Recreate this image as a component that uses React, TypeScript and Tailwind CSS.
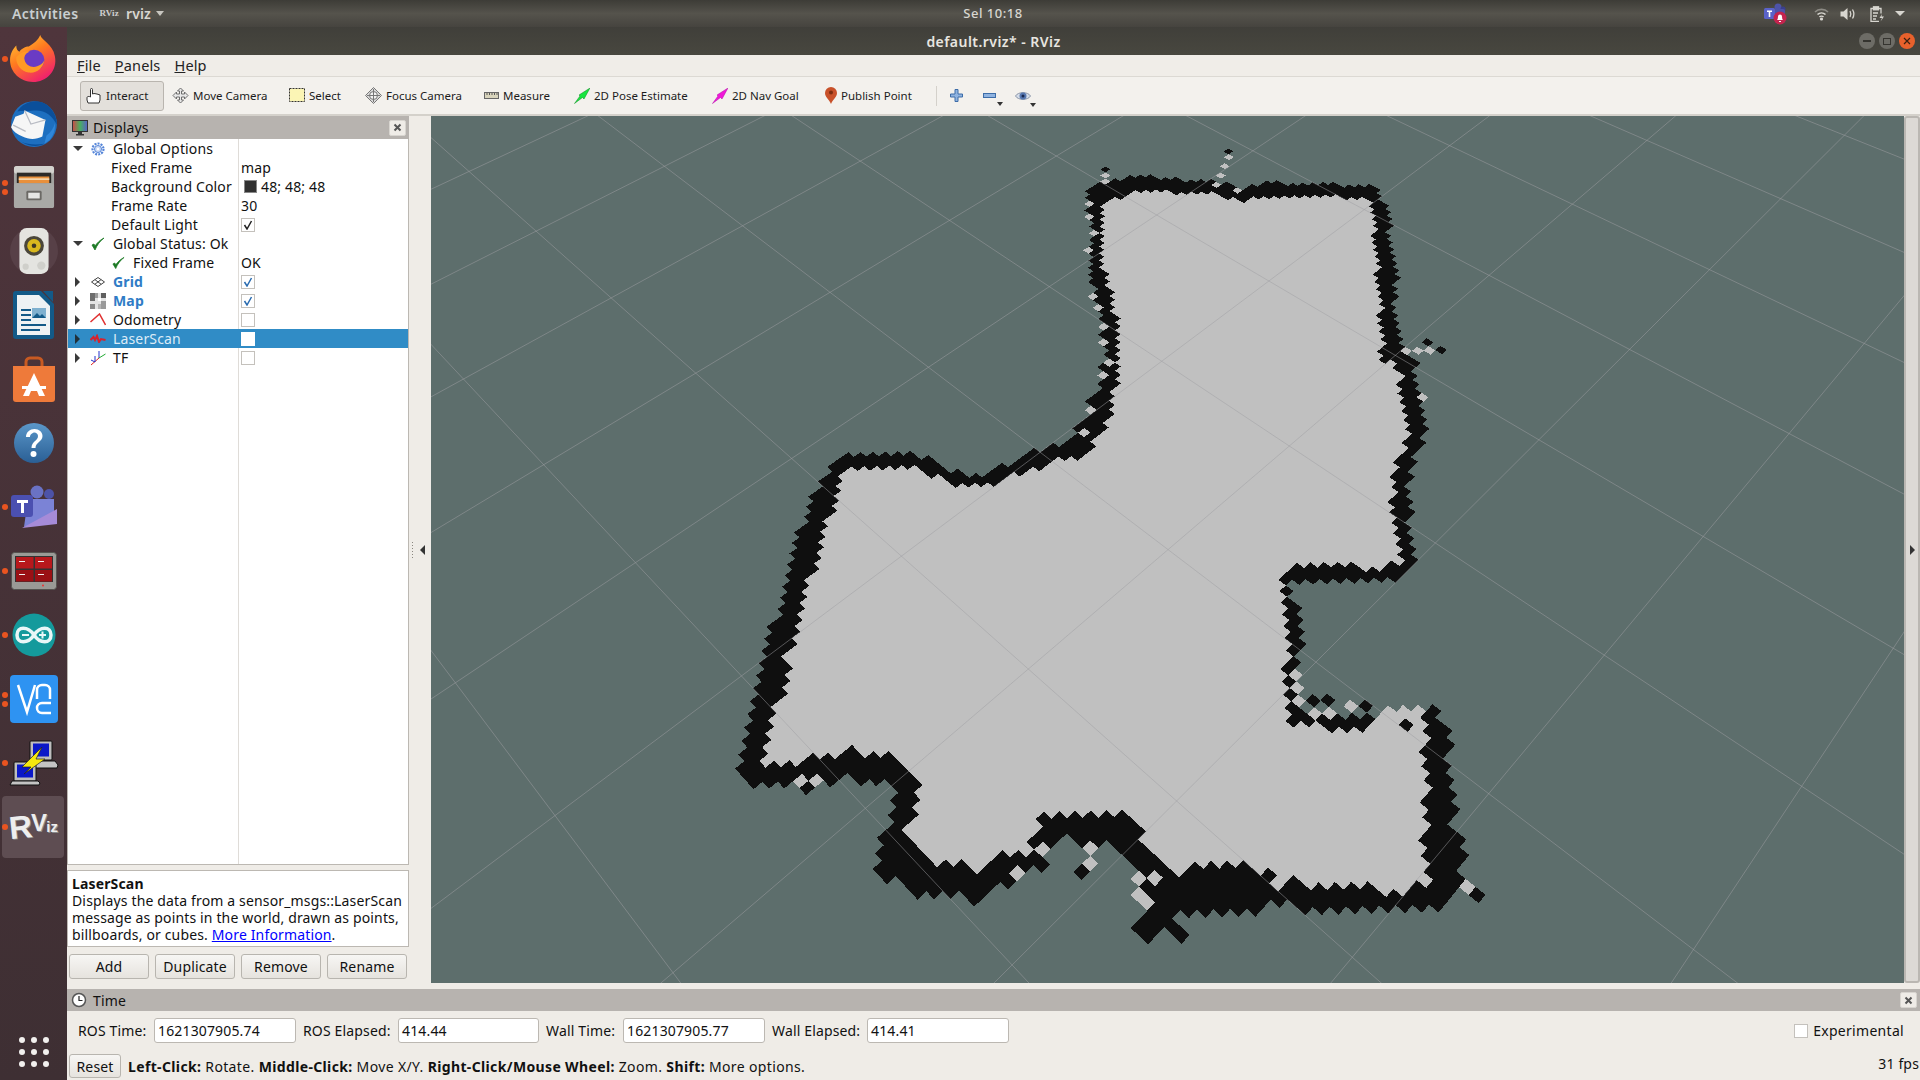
import React from "react";

/* ---------- perspective map ---------- */
type P = [number, number];
const refs: [number, number, number, number][] = [
  [0, 0, 1353, 959], [1, 0, 1177, 802], [2, 0, 1028, 669], [3, 0, 902, 556], [4, 0, 792, 457],
  [0, 1, 1487, 793], [1, 1, 1315, 662], [2, 1, 1169, 550], [3, 1, 1040, 452], [2, 2, 1287, 447],
  [3, 2, 1161, 361], [3, 3, 1267, 282], [4, 3, 1156, 216], [5, 3, 1056, 157], [3, 4, 1380, 199],
  [4, 4, 1250, 153], [3, 5, 1443, 150],
];
function solve(A: number[][], b: number[]) {
  const n = b.length;
  const M = A.map((r, i) => [...r, b[i]]);
  for (let c = 0; c < n; c++) {
    let p = c;
    for (let r = c + 1; r < n; r++) if (Math.abs(M[r][c]) > Math.abs(M[p][c])) p = r;
    [M[c], M[p]] = [M[p], M[c]];
    for (let r = 0; r < n; r++) {
      if (r === c) continue;
      const f = M[r][c] / M[c][c];
      for (let k = c; k <= n; k++) M[r][k] -= f * M[c][k];
    }
  }
  return M.map((r, i) => r[n] / r[i]);
}
function fit() {
  const AtA = Array.from({ length: 8 }, () => new Array(8).fill(0));
  const Atb = new Array(8).fill(0);
  const add = (row: number[], v: number) => {
    for (let a = 0; a < 8; a++) {
      Atb[a] += row[a] * v;
      for (let c = 0; c < 8; c++) AtA[a][c] += row[a] * row[c];
    }
  };
  for (const [i, j, x0, y0] of refs) {
    const x = x0 / 1000, y = y0 / 1000;
    add([i, j, 1, 0, 0, 0, -i * x, -j * x], x);
    add([0, 0, 0, i, j, 1, -i * y, -j * y], y);
  }
  return solve(AtA, Atb);
}
const h = fit();
const fwd = (u: number, v: number): P => {
  const w = h[6] * u + h[7] * v + 1;
  return [(1000 * (h[0] * u + h[1] * v + h[2])) / w, (1000 * (h[3] * u + h[4] * v + h[5])) / w];
};
const inv = (x0: number, y0: number): P => {
  const x = x0 / 1000, y = y0 / 1000;
  const s = solve([[h[0] - h[6] * x, h[1] - h[7] * x], [h[3] - h[6] * y, h[4] - h[7] * y]], [x - h[2], y - h[5]]);
  return [s[0], s[1]];
};

const wall: [number, number, number][] = [
  [1097, 193, 20], [1140, 183, 16], [1190, 187, 12], [1217, 187, 12], [1240, 195, 14], [1262, 190, 14], [1323, 190, 12],
  [1373, 193, 12], [1380, 210, 14], [1383, 243, 16], [1387, 277, 18], [1387, 310, 14], [1392, 345, 14], [1400, 355, 16],
  [1407, 372, 14], [1413, 397, 20], [1416, 430, 18], [1414, 441, 14], [1402, 471, 14], [1400, 500, 14], [1405, 535, 16],
  [1408, 565, 14], [1384, 575, 13], [1340, 572, 14], [1296, 572, 16], [1286, 582, 12], [1290, 620, 14], [1294, 650, 14],
  [1292, 690, 10], [1293, 718, 14], [1330, 722, 12], [1367, 725, 12], [1385, 712, 0], [1425, 712, 0], [1437, 730, 16],
  [1438, 745, 22], [1437, 770, 26], [1440, 800, 28], [1438, 830, 28], [1445, 850, 35], [1445, 880, 35], [1430, 895, 26],
  [1400, 905, 16], [1380, 900, 22], [1350, 898, 22], [1317, 900, 30], [1290, 892, 28], [1243, 888, 43], [1207, 888, 43],
  [1173, 893, 45], [1147, 865, 22], [1135, 850, 26], [1125, 830, 30], [1090, 830, 30], [1050, 830, 26], [1040, 845, 18],
  [1035, 860, 22], [1000, 872, 26], [980, 885, 30], [950, 880, 34], [925, 878, 40], [897, 860, 42], [895, 835, 24], [900, 820, 20],
  [905, 800, 22], [907, 780, 20], [880, 770, 30], [855, 765, 28], [825, 768, 26], [800, 772, 22], [775, 773, 20],
  [752, 775, 22], [750, 760, 22], [757, 725, 22], [770, 690, 26], [778, 650, 22], [790, 610, 22], [800, 575, 22],
  [813, 530, 24], [825, 495, 20], [835, 470, 14], [850, 460, 14], [910, 460, 14], [930, 468, 14], [955, 478, 12],
  [983, 482, 10], [1020, 465, 14], [1050, 455, 16], [1075, 447, 20], [1095, 425, 24], [1107, 387, 16], [1110, 363, 14],
  [1112, 343, 14], [1108, 317, 16], [1103, 297, 16], [1097, 273, 14], [1097, 253, 14], [1097, 230, 14], [1097, 203, 16],
];
const spurs: [number, number, number][][] = [
  [[1182, 945, 14], [1170, 915, 18]],
  [[1140, 937, 12], [1160, 910, 16]],
  [[1385, 355, 10], [1410, 362, 10]],
];
const z5 = (a: number[][]) => a.map(([x, y]) => [1040 + x / 3, 130 + y / 3]);
const z7 = (a: number[][]) => a.map(([x, y]) => [1000 + x / 3, 650 + y / 3]);
const z6 = (a: number[][]) => a.map(([x, y]) => [720 + x / 3, 440 + y / 3]);
const strayFree = [
  ...z5([[150, 228], [150, 265], [160, 310], [145, 360], [157, 500], [180, 537], [190, 590], [188, 637], [205, 697], [188, 735], [150, 838], [132, 905], [193, 142], [193, 158], [565, 85], [553, 110], [545, 135], [537, 160], [595, 180], [1085, 665], [1125, 655], [1160, 660], [1135, 805]]),
  ...z7([[885, 75], [890, 115], [895, 155], [940, 190], [995, 180], [1050, 170], [1160, 185], [1205, 180], [1250, 180], [1245, 235], [1400, 715], [1265, 700], [270, 600], [270, 650], [55, 680], [420, 690], [470, 690], [430, 740], [445, 765], [130, 590], [830, 710], [1195, 190]]),
  ...z6([[235, 1030], [285, 1030], [135, 970]]),
];
const strayWall = [
  ...z5([[195, 122], [570, 63], [150, 812], [1150, 640], [1205, 652]]),
  ...z7([[935, 152], [980, 152], [1095, 168], [1290, 185], [1225, 215], [1430, 738], [250, 675], [810, 682]]),
  ...z6([[258, 1050]]),
];
const strayBg = z7([[200, 580]]);

function segDist(px: number, py: number, a: number[], b: number[]) {
  const dx = b[0] - a[0], dy = b[1] - a[1];
  const l = dx * dx + dy * dy || 1;
  let t = ((px - a[0]) * dx + (py - a[1]) * dy) / l;
  t = Math.max(0, Math.min(1, t));
  const ex = px - a[0] - t * dx, ey = py - a[1] - t * dy;
  return { d: Math.sqrt(ex * ex + ey * ey), w: a[2] + t * (b[2] - a[2]) };
}
const RES = 20, UMIN = -2, UMAX = 8, VMIN = -3, VMAX = 7;
function buildMap() {
  const nu = (UMAX - UMIN) * RES, nv = (VMAX - VMIN) * RES;
  const g = new Uint8Array(nu * nv);
  const segs: [number[], number[]][] = [];
  wall.forEach((p, i) => segs.push([p, wall[(i + 1) % wall.length]]));
  spurs.forEach((s) => segs.push([s[0], s[1]]));
  for (let a = 0; a < nu; a++) {
    for (let b = 0; b < nv; b++) {
      const [x, y] = fwd(UMIN + (a + 0.5) / RES, VMIN + (b + 0.5) / RES);
      if (x < 720 || x > 1500 || y < 160 || y > 960) continue;
      let black = false;
      for (const [p, q] of segs) {
        const r = segDist(x, y, p, q);
        if (r.d <= r.w / 2) { black = true; break; }
      }
      if (black) { g[a * nv + b] = 2; continue; }
      let inside = false;
      for (let i = 0, j = wall.length - 1; i < wall.length; j = i++) {
        const A = wall[i], B = wall[j];
        if (A[1] > y !== B[1] > y && x < ((B[0] - A[0]) * (y - A[1])) / (B[1] - A[1]) + A[0]) inside = !inside;
      }
      if (inside) g[a * nv + b] = 1;
    }
  }
  const put = (list: number[][], val: number) => {
    for (const [x, y] of list) {
      const [u, v] = inv(x, y);
      const a = Math.floor((u - UMIN) * RES), b = Math.floor((v - VMIN) * RES);
      if (a >= 0 && a < nu && b >= 0 && b < nv) g[a * nv + b] = val;
    }
  };
  put(strayFree, 1);
  put(strayWall, 2);
  put(strayBg, 0);
  const d: Record<number, string[]> = { 1: [], 2: [] };
  const f = (p: P) => `${p[0].toFixed(1)} ${p[1].toFixed(1)}`;
  for (let b = 0; b < nv; b++) {
    for (let a = 0; a < nu; a++) {
      const val = g[a * nv + b];
      if (!val) continue;
      const u0 = UMIN + a / RES, u1 = UMIN + (a + 1) / RES, v0 = VMIN + b / RES, v1 = VMIN + (b + 1) / RES;
      d[val].push(`M${f(fwd(u0, v0))}L${f(fwd(u1, v0))}L${f(fwd(u1, v1))}L${f(fwd(u0, v1))}Z`);
    }
  }
  return { free: d[1].join(""), occ: d[2].join("") };
}
function gridLines() {
  const out: string[] = [];
  for (let k = -5; k <= 9; k++) {
    const a = fwd(k, -5), b = fwd(k, 9);
    out.push(`M${a[0].toFixed(1)} ${a[1].toFixed(1)}L${b[0].toFixed(1)} ${b[1].toFixed(1)}`);
    const c = fwd(-5, k), e = fwd(9, k);
    out.push(`M${c[0].toFixed(1)} ${c[1].toFixed(1)}L${e[0].toFixed(1)} ${e[1].toFixed(1)}`);
  }
  return out.join("");
}

function MapView() {
  const m = React.useMemo(buildMap, []);
  const lines = React.useMemo(gridLines, []);
  return (
    <svg className="block w-[1473px] h-[867px]" viewBox="431 116 1473 867">
      <rect x="431" y="116" width="1473" height="867" fill="#5d6e6c" />
      <path d={m.free} fill="#c0c0c0" shapeRendering="crispEdges" />
      <path d={m.occ} fill="#0f0f0f" shapeRendering="crispEdges" />
      <path d={lines} stroke="#a0a0a4" strokeOpacity="0.5" strokeWidth="1" fill="none" />
    </svg>
  );
}

/* ---------- dock icons ---------- */
const Firefox = () => (
  <svg width="50" height="50" viewBox="0 0 48 48">
    <defs>
      <linearGradient id="ff" x1="0" y1="0" x2="0.6" y2="1"><stop offset="0" stopColor="#ffd43a" /><stop offset="0.5" stopColor="#ff7a1f" /><stop offset="1" stopColor="#f0246a" /></linearGradient>
    </defs>
    <path d="M30 1c1 5 12 9 14 20 3 14-8 25-21 25C11 46 1 37 1 25 1 19 4 14 7 11c0 3 1 5 3 6 2-3 6-5 9-5 5-3 9-6 11-11z" fill="url(#ff)" />
    <circle cx="24" cy="25" r="10" fill="#6a3bc4" />
    <path d="M7 22c3-4 8-6 13-5-4 1-6 4-5 8 1 5 7 8 12 6 3-1 6-3 7-6-1 8-8 13-15 12-7-1-13-8-12-15z" fill="#ff9a26" />
  </svg>
);
const Thunderbird = () => (
  <svg width="50" height="50" viewBox="0 0 48 48">
    <circle cx="24" cy="25" r="22" fill="#1d6fc0" />
    <path d="M8 13C14 3 28 0 37 7c6 5 9 12 9 19-4-9-12-15-22-14-7 1-12 0-16 1z" fill="#0b4f9a" />
    <path d="M2 28l4-10 8-3 1-3 20 9-3 16c-6 3-13 3-19 0C8 35 4 32 2 28z" fill="#f6f6f6" />
    <path d="M15 12l6 13 14-4M4 26l12 6" stroke="#b9bcc4" strokeWidth="1.200" fill="none" />
    <path d="M36 36c4-3 7-7 8-12 1 9-3 16-10 20l2-8z" fill="#2f86d9" />
    <path d="M12 42c6 3 14 3 22 2-6 3-14 3-22-2z" fill="#0b4f9a" />
  </svg>
);
const Files = () => (
  <svg width="42" height="44" viewBox="0 0 44 46">
    <path d="M1 4a3 3 0 013-3h36a3 3 0 013 3v38a3 3 0 01-3 3H4a3 3 0 01-3-3z" fill="#a3a3a0" />
    <rect x="1" y="1" width="42" height="8" rx="3" fill="#d4d3cf" />
    <rect x="4" y="8" width="36" height="11" fill="#2c2a28" />
    <rect x="6" y="12" width="32" height="7" fill="#e8903c" />
    <rect x="6" y="14" width="32" height="1.500" fill="#f6e2c0" />
    <rect x="1" y="19" width="42" height="26" rx="2" fill="#a9a9a6" />
    <rect x="14" y="27" width="16" height="10" rx="1.500" fill="#6b6965" />
    <rect x="16" y="29" width="12" height="6" fill="#e6e6e4" />
  </svg>
);
const Speaker = () => (
  <svg width="50" height="50" viewBox="0 0 48 48">
    <circle cx="24" cy="24" r="23" fill="#574047" />
    <rect x="10" y="2" width="28" height="44" rx="7" fill="#e4e4e0" />
    <circle cx="24" cy="19" r="9.500" fill="#4a463a" />
    <circle cx="24" cy="19" r="6.500" fill="#d8b81e" />
    <circle cx="24" cy="19" r="2.200" fill="#3a3626" />
    <circle cx="16" cy="39" r="3" fill="#cfcfca" />
    <circle cx="31" cy="38" r="4" fill="#d0d0cb" />
  </svg>
);
const Writer = () => (
  <svg width="42" height="48" viewBox="0 0 42 48">
    <path d="M3 0h25l13 13v32a3 3 0 01-3 3H3a3 3 0 01-3-3V3a3 3 0 013-3z" fill="#135a88" />
    <path d="M4 4h22l11 11v29H4z" fill="#eef2f4" />
    <path d="M30 0h10v11z" fill="#135a88" />
    <rect x="8" y="18" width="10" height="2" fill="#135a88" /><rect x="8" y="23" width="10" height="2" fill="#135a88" /><rect x="8" y="28" width="10" height="2" fill="#135a88" />
    <rect x="19" y="17" width="14" height="10" fill="#7fb0cf" />
    <path d="M19 27l5-5 3 3 2-2 4 4z" fill="#135a88" />
    <rect x="8" y="33" width="25" height="2" fill="#135a88" /><rect x="8" y="38" width="19" height="2" fill="#135a88" />
  </svg>
);
const Software = () => (
  <svg width="44" height="46" viewBox="0 0 44 46">
    <path d="M14 10V6a4 4 0 014-4h8a4 4 0 014 4v4" stroke="#c85a22" strokeWidth="3" fill="none" />
    <path d="M1 10h42v33a3 3 0 01-3 3H4a3 3 0 01-3-3z" fill="#ee7a3a" />
    <path d="M22 17l11 23h-6l-2-5h-6l-2 5h-6z" fill="#fff" />
    <rect x="10" y="30" width="24" height="3" fill="#fff" />
  </svg>
);
const Help = () => (
  <svg width="42" height="42" viewBox="0 0 42 42">
    <defs><linearGradient id="hp" x1="0" y1="0" x2="0" y2="1"><stop offset="0" stopColor="#5b97c9" /><stop offset="1" stopColor="#2a5f95" /></linearGradient></defs>
    <circle cx="21" cy="21" r="20" fill="url(#hp)" />
    <path d="M13 15c0-5 4-8 8.500-8s8 3 8 7c0 6-7 6-7 12h-4c0-7 6.500-7 6.500-12 0-2-2-3.500-3.500-3.500S17 12 17 15z" fill="#fff" />
    <circle cx="20.500" cy="32" r="3" fill="#fff" />
  </svg>
);
const Teams = () => (
  <svg width="48" height="46" viewBox="0 0 48 46">
    <circle cx="27" cy="8" r="6.500" fill="#6a72c4" />
    <circle cx="39" cy="10" r="5" fill="#4d53a8" />
    <path d="M18 15h26v20l-30 8z" fill="#7b83d6" />
    <rect x="1" y="11" width="22" height="22" rx="3" fill="#4b50b0" />
    <path d="M7 16h11v3h-4v10h-3V19H7z" fill="#fff" />
    <path d="M12 44l35-19v15z" fill="#a68bd8" />
  </svg>
);
const RedPanel = () => (
  <svg width="46" height="38" viewBox="0 0 46 38">
    <rect x="0.500" y="0.500" width="45" height="37" rx="3" fill="#9a9a96" stroke="#55534f" />
    <rect x="4" y="4" width="38" height="26" fill="#333" />
    <rect x="5" y="5" width="17.500" height="11.500" fill="#b8181c" /><rect x="24" y="5" width="17" height="11.500" fill="#b8181c" />
    <rect x="5" y="18" width="17.500" height="11.500" fill="#9a1014" /><rect x="24" y="18" width="17" height="11.500" fill="#9a1014" />
    <rect x="8" y="9" width="6" height="1" fill="#eee" /><rect x="27" y="9" width="6" height="1" fill="#eee" />
    <rect x="8" y="22" width="6" height="1" fill="#eee" /><rect x="27" y="22" width="6" height="1" fill="#eee" />
    <circle cx="32" cy="33.500" r="1" fill="#e33" />
  </svg>
);
const Arduino = () => (
  <svg width="44" height="44" viewBox="0 0 44 44">
    <circle cx="22" cy="22" r="21.500" fill="#149a9c" />
    <path d="M5 22c0-9 11-9 17 0 6 9 17 9 17 0s-11-9-17 0c-6 9-17 9-17 0z" stroke="#e8f7f7" strokeWidth="3.500" fill="none" />
    <rect x="10" y="21" width="7" height="2" fill="#e8f7f7" />
    <path d="M27 21h2.500v-2.500h2V21H34v2h-2.500v2.500h-2V23H27z" fill="#e8f7f7" />
  </svg>
);
const Vnc = () => (
  <svg width="48" height="48" viewBox="0 0 48 48">
    <rect width="48" height="48" rx="4" fill="#2e93f2" />
    <path d="M8 10l9 27 8-27M27 24V15a5 5 0 015-5h3a5 5 0 015 5v9" stroke="#fff" strokeWidth="2.500" fill="none" />
    <path d="M41 28H32a5 5 0 000 10h9" stroke="#fff" strokeWidth="2.500" fill="none" />
  </svg>
);
const Network = () => (
  <svg width="50" height="46" viewBox="0 0 50 46">
    <rect x="21" y="1" width="22" height="19" rx="1" fill="#bdbdbd" stroke="#111" /><rect x="24" y="3.500" width="16" height="13" fill="#0a18c8" />
    <path d="M20 21h26l3 4-1 3H21z" fill="#c4c4c4" stroke="#111" />
    <rect x="5" y="22" width="22" height="19" rx="1" fill="#bdbdbd" stroke="#111" /><rect x="8" y="24.500" width="16" height="13" fill="#0a18c8" />
    <path d="M3 41h26l2 2-1 2H1z" fill="#c4c4c4" stroke="#111" />
    <path d="M33 7L13 27h9l-7 7 21-15h-9l6-12z" fill="#f5e80e" stroke="#222" strokeWidth="0.700" />
  </svg>
);

const Dot = ({ y }: { y: number }) => <span className="w-[6px] h-[6px] rounded-full bg-[#e95420] block" style={{ marginTop: y }} />;

function DockItem({ dots = 0, active, children }: { dots?: number; active?: boolean; children: React.ReactNode }) {
  return (
    <div className="h-[64px] w-[67px] flex items-center justify-center relative">
      {active && <div className="absolute left-[2px] top-[1px] w-[62px] h-[62px] rounded-[4px] bg-[#5e4d52]" />}
      {dots > 0 && (
        <div className="absolute left-[2px] top-0 h-full flex flex-col justify-center">
          {dots >= 1 && <Dot y={0} />}
          {dots >= 2 && <Dot y={3} />}
        </div>
      )}
      <div className="relative flex items-center justify-center">{children}</div>
    </div>
  );
}

function Dock() {
  return (
    <div className="w-[67px] shrink-0 flex flex-col bg-gradient-to-b from-[#4f353c] to-[#3e2f33]">
      <DockItem dots={1}><Firefox /></DockItem>
      <DockItem><Thunderbird /></DockItem>
      <DockItem dots={2}><Files /></DockItem>
      <DockItem><Speaker /></DockItem>
      <DockItem><Writer /></DockItem>
      <DockItem><Software /></DockItem>
      <DockItem><Help /></DockItem>
      <DockItem dots={1}><Teams /></DockItem>
      <DockItem dots={1}><RedPanel /></DockItem>
      <DockItem dots={1}><Arduino /></DockItem>
      <DockItem dots={2}><Vnc /></DockItem>
      <DockItem dots={1}><Network /></DockItem>
      <DockItem dots={1} active>
        <span className="font-['Liberation_Sans',sans-serif] font-bold text-[#eeeeee] leading-none flex items-start [text-shadow:1px_1px_0_#8a8a8a]">
          <span className="text-[32px] rotate-[-6deg]">R</span>
          <span className="text-[24px] ml-[-1px]">V</span>
          <span className="text-[15px] mt-[8px] ml-[-1px]">iz</span>
        </span>
      </DockItem>
      <div className="flex-1 flex items-end justify-center pb-[13px]">
        <div className="grid grid-cols-3 gap-x-[6px] gap-y-[6px]">
          {Array.from({ length: 9 }).map((_, i) => <span key={i} className="w-[6px] h-[6px] rounded-full bg-[#f2f0ee] block" />)}
        </div>
      </div>
    </div>
  );
}

/* ---------- toolbar icons ---------- */
const HandI = () => (
  <svg width="17" height="17" viewBox="0 0 17 17" fill="#fff" stroke="#333" strokeWidth="1">
    <path d="M5.500 10V2.500a1 1 0 012 0V7l1.500-.5 2 .3 2 .5 2 .7V13l-1 3H3l-1-3V10.500c0-1 2-1.500 3.500-.5z" />
  </svg>
);
const MoveI = () => (
  <svg width="17" height="17" viewBox="0 0 17 17" fill="none" stroke="#6d6d6d" strokeWidth="1">
    <path d="M8.500 1l3 3H9.500v3h3V5l3.500 3.500-3.500 3.500v-2h-3v3h2l-3 3-3-3h2v-3h-3v2L1 8.500 4.500 5v2h3V4h-2z" fill="#e8e8e8" />
  </svg>
);
const SelectI = () => (
  <svg width="16" height="15" viewBox="0 0 16 15">
    <rect x="0.500" y="0.500" width="15" height="13" fill="#fbf5b5" stroke="#333" strokeDasharray="2 1" />
  </svg>
);
const FocusI = () => (
  <svg width="17" height="17" viewBox="0 0 17 17" fill="none" stroke="#777">
    <path d="M8.500 0.500L16.500 8.500 8.500 16.500 0.500 8.500z" fill="#dcdcdc" />
    <circle cx="8.500" cy="8.500" r="4" fill="#f2f2f2" />
    <path d="M8.500 2v13M2 8.500h13" />
  </svg>
);
const RulerI = () => (
  <svg width="15" height="9" viewBox="0 0 15 9">
    <rect x="0.500" y="1.500" width="14" height="6" fill="#d8d4bc" stroke="#666" />
    <path d="M3 2v2M5.500 2v2M8 2v2M10.500 2v2M13 2v2" stroke="#555" />
  </svg>
);
const ArrowI = ({ c }: { c: string }) => (
  <svg width="16" height="16" viewBox="0 0 16 16">
    <path d="M0.500 15.500L6 8l-1-1 11-7-6 11-1.500-1.500z" fill={c} stroke={c === "#18e640" ? "#0a8a20" : "#b00ea8"} strokeWidth="0.500" />
  </svg>
);
const PinI = () => (
  <svg width="12" height="17" viewBox="0 0 12 17">
    <path d="M6 0a6 6 0 016 6c0 4-4 6-6 11C4 12 0 10 0 6a6 6 0 016-6z" fill="#c8512a" />
    <circle cx="6" cy="5.500" r="2" fill="#7d2c10" />
  </svg>
);
const PlusI = () => (
  <svg width="13" height="13" viewBox="0 0 13 13">
    <path d="M5 0.500h3V5h4.500v3H8v4.500H5V8H0.500V5H5z" fill="#8fb3e0" stroke="#3d6da8" />
  </svg>
);
const MinusI = () => (
  <svg width="13" height="5" viewBox="0 0 13 5">
    <rect x="0.500" y="0.500" width="12" height="4" fill="#8fb3e0" stroke="#3d6da8" />
  </svg>
);
const EyeI = () => (
  <svg width="16" height="12" viewBox="0 0 16 12">
    <path d="M0.500 6C3 1.500 13 1.500 15.500 6 13 10.500 3 10.500 0.500 6z" fill="#d5dde8" stroke="#8a95a8" />
    <circle cx="8" cy="6" r="3.500" fill="#5778b0" />
    <circle cx="8" cy="6" r="1.500" fill="#1a2a50" />
  </svg>
);
const Caret = () => <span className="block w-0 h-0 border-x-[3px] border-x-transparent border-t-[4px] border-t-[#333]" />;

function Tool({ icon, label, w, active, iconW = 16 }: { icon: React.ReactNode; label: string; w: number; active?: boolean; iconW?: number }) {
  return (
    <div
      className={`h-[30px] flex items-center shrink-0 ${active ? "bg-[#e3e0db] border border-[#b9b5af] rounded-[3px] pl-[4px]" : "pl-[1px]"}`}
      style={{ width: w }}
    >
      <span className="flex items-center justify-center shrink-0" style={{ width: iconW }}>{icon}</span>
      <span className="ml-[4px] text-[11.500px] tracking-normal text-[#1c1c1c] whitespace-nowrap">{label}</span>
    </div>
  );
}

/* ---------- tree ---------- */
const Arrow = ({ open, light }: { open?: boolean; light?: boolean }) =>
  open ? (
    <span className="block w-0 h-0 border-x-[5px] border-x-transparent border-t-[5px] border-t-[#3a3a3a]" />
  ) : (
    <span className={`block w-0 h-0 ml-[2px] border-y-[5px] border-y-transparent border-l-[5px] ${light ? "border-l-[#20303a]" : "border-l-[#3a3a3a]"}`} />
  );
const Chk = ({ on, blue, white }: { on?: boolean; blue?: boolean; white?: boolean }) => (
  <span className={`w-[14px] h-[14px] border ${white ? "border-white" : "border-[#c4c1bc]"} bg-white flex items-center justify-center shrink-0`}>
    {on && (
      <svg width="10" height="10" viewBox="0 0 10 10"><path d="M1.500 5l2.500 4L8.500 1" stroke={blue ? "#2b6cb0" : "#222"} strokeWidth="1.500" fill="none" /></svg>
    )}
  </span>
);
const GreenCheck = () => (
  <svg width="14" height="14" viewBox="0 0 14 14"><path d="M1 8l3 5C6 8 9 4 13 1 9 3 6 6 4 9L3 7z" fill="#1c7a24" stroke="#1c7a24" strokeWidth="0.800" /></svg>
);
const GearI = () => (
  <svg width="14" height="14" viewBox="0 0 14 14" fill="none">
    <circle cx="7" cy="7" r="5.500" stroke="#5585d8" strokeWidth="2.200" strokeDasharray="2 1.100" />
    <circle cx="7" cy="7" r="3.500" fill="#cfdcf5" stroke="#5585d8" />
    <circle cx="7" cy="7" r="1.200" fill="#fff" />
  </svg>
);
const GridI = () => (
  <svg width="14" height="10" viewBox="0 0 14 10" fill="none" stroke="#444"><path d="M7 0.500L13.500 5 7 9.500 0.500 5zM3.800 2.500L10.200 7.300M10.200 2.500L3.800 7.300" /></svg>
);
const MapI = () => (
  <svg width="16" height="16" viewBox="0 0 16 16" shapeRendering="crispEdges">
    <rect width="16" height="16" fill="#e4e4e4" />
    <rect x="0" y="0" width="5" height="8" fill="#6d6d6d" /><rect x="5" y="0" width="3" height="5" fill="#9a9a9a" /><rect x="11" y="0" width="5" height="5" fill="#5f5f5f" />
    <rect x="0" y="11" width="5" height="5" fill="#8a8a8a" /><rect x="8" y="11" width="3" height="5" fill="#b5b5b5" /><rect x="11" y="8" width="5" height="8" fill="#9a9a9a" /><rect x="8" y="5" width="3" height="3" fill="#fff" />
  </svg>
);
const OdoI = () => (
  <svg width="16" height="13" viewBox="0 0 16 13" fill="none"><path d="M0.500 9L9.500 1 15.500 12" stroke="#e03030" strokeWidth="1.500" /></svg>
);
const LaserI = () => (
  <svg width="16" height="9" viewBox="0 0 16 9" fill="none"><path d="M0.500 6l3-3 1.500 3 2-4 2 6 2-3 4.500 1" stroke="#d8222c" strokeWidth="2" /></svg>
);
const TfI = () => (
  <svg width="16" height="16" viewBox="0 0 16 16" fill="none">
    <path d="M9 1v7" stroke="#2233cc" /><path d="M9 8L15.500 4" stroke="#22aa33" /><path d="M9 8L1 15" stroke="#dd2222" />
    <path d="M5 6v6M5 12l-4-2" stroke="#2233cc" />
  </svg>
);

function Row({ selected, open, icon, label, bold, pl, value, sub }: {
  selected?: boolean; open?: boolean; icon?: React.ReactNode; label: string; bold?: boolean; pl?: number; value?: React.ReactNode; sub?: boolean;
}) {
  const color = selected ? "text-[#dcebf7]" : bold ? "text-[#2f7cc6] font-bold" : "text-[#111]";
  return (
    <div className={`h-[19px] flex shrink-0 ${selected ? "bg-[#308cc6]" : ""}`}>
      <div className={`w-[171px] h-full flex items-center shrink-0 border-r ${selected ? "border-[#308cc6]" : "border-[#dfdcd8]"}`}>
        {pl !== undefined ? (
          <div style={{ paddingLeft: pl }} className="flex items-center">
            {sub && <span className="w-[13px] mr-[8px] flex justify-center"><GreenCheck /></span>}
            <span className={`text-[14px] whitespace-nowrap ${color}`}>{label}</span>
          </div>
        ) : (
          <>
            <span className="w-[20px] pl-[5px] flex items-center"><Arrow open={open} light={selected} /></span>
            <span className="w-[20px] flex items-center justify-center">{icon}</span>
            <span className={`ml-[5px] text-[14px] whitespace-nowrap ${color}`}>{label}</span>
          </>
        )}
      </div>
      <div className="flex-1 flex items-center pl-[2px] text-[14px] text-[#111] whitespace-nowrap">{value}</div>
    </div>
  );
}

const XBtn = () => (
  <span className="w-[17px] h-[16px] bg-[#efece7] border border-[#d8d5d0] rounded-[2px] flex items-center justify-center">
    <svg width="9" height="9" viewBox="0 0 9 9"><path d="M1.500 1.500l6 6M7.500 1.500l-6 6" stroke="#555" strokeWidth="2" /></svg>
  </span>
);
const DockHdr = ({ icon, title }: { icon: React.ReactNode; title: string }) => (
  <div className="h-[23px] bg-[#b7b3af] flex items-center justify-between pl-[4px] pr-[3px] shrink-0">
    <div className="flex items-center"><span className="w-[17px] flex justify-center">{icon}</span><span className="ml-[5px] text-[14px] text-[#111]">{title}</span></div>
    <XBtn />
  </div>
);
const Btn = ({ children, w }: { children: React.ReactNode; w: number }) => (
  <div className="h-[25px] flex items-center justify-center border border-[#b8b5af] rounded-[3px] bg-gradient-to-b from-[#f7f6f4] to-[#e6e3de] text-[14px] text-[#111]" style={{ width: w }}>{children}</div>
);
const Field = ({ label, value, w, lw }: { label: string; value: string; w: number; lw: number }) => (
  <div className="flex items-center">
    <span className="text-[14px] text-[#111] whitespace-nowrap" style={{ width: lw }}>{label}</span>
    <div className="h-[25px] bg-white border border-[#bcb8b2] rounded-[3px] flex items-center pl-[3px] text-[14px] text-[#111]" style={{ width: w }}>{value}</div>
  </div>
);

function LeftPanel() {
  return (
    <div className="w-[342px] shrink-0 flex flex-col">
      <DockHdr
        title="Displays"
        icon={
          <svg width="16" height="16" viewBox="0 0 16 16">
            <defs><linearGradient id="mon" x1="0" y1="0" x2="1" y2="0"><stop offset="0" stopColor="#d04848" /><stop offset="0.5" stopColor="#48b060" /><stop offset="1" stopColor="#5a60c8" /></linearGradient></defs>
            <rect x="0.500" y="0.500" width="15" height="11" fill="url(#mon)" stroke="#333" />
            <path d="M6 12h4v2H6zM4 14h8v1.500H4z" fill="#333" />
          </svg>
        }
      />
      <div className="h-[726px] bg-white border border-t-0 border-[#bcb8b2] flex flex-col shrink-0">
        <Row open icon={<GearI />} label="Global Options" />
        <Row pl={43} label="Fixed Frame" value="map" />
        <Row pl={43} label="Background Color" value={<><span className="w-[13px] h-[13px] bg-[#303030] border border-[#888] mr-[4px] ml-[3px]" />48; 48; 48</>} />
        <Row pl={43} label="Frame Rate" value="30" />
        <Row pl={43} label="Default Light" value={<Chk on />} />
        <Row open icon={<GreenCheck />} label="Global Status: Ok" />
        <Row pl={44} sub label="Fixed Frame" value="OK" />
        <Row icon={<GridI />} label="Grid" bold value={<Chk on blue />} />
        <Row icon={<MapI />} label="Map" bold value={<Chk on blue />} />
        <Row icon={<OdoI />} label="Odometry" value={<Chk />} />
        <Row selected icon={<LaserI />} label="LaserScan" value={<Chk white />} />
        <Row icon={<TfI />} label="TF" value={<Chk />} />
        <div className="flex-1 w-[171px] border-r border-[#dfdcd8]" />
      </div>
      <div className="h-[5px] shrink-0" />
      <div className="h-[77px] bg-white border border-[#bcb8b2] pl-[4px] pt-[4px] text-[14px] leading-[17px] text-[#111] shrink-0 whitespace-nowrap">
        <div className="font-bold">LaserScan</div>
        <div>Displays the data from a sensor_msgs::LaserScan</div>
        <div>message as points in the world, drawn as points,</div>
        <div>billboards, or cubes. <span className="text-[#0000ff] underline">More Information</span>.</div>
      </div>
      <div className="flex gap-[6px] pl-[2px] pt-[7px] shrink-0">
        <Btn w={80}>Add</Btn><Btn w={80}>Duplicate</Btn><Btn w={80}>Remove</Btn><Btn w={80}>Rename</Btn>
      </div>
    </div>
  );
}

function WinBtn({ c, children }: { c: string; children: React.ReactNode }) {
  return <span className={`w-[16px] h-[16px] rounded-full flex items-center justify-center ${c}`}>{children}</span>;
}

export default function App() {
  return (
    <div className="w-[1920px] h-[1080px] overflow-hidden flex flex-col font-['Noto_Sans',sans-serif] tracking-[0.15px] bg-[#efece7]">
      {/* top bar */}
      <div className="h-[27px] shrink-0 flex items-center bg-gradient-to-b from-[#3d3c37] via-[#55534c] to-[#46443f] text-[14px] text-[#d8d6d0]">
        <div className="w-[260px] flex items-center">
          <span className="ml-[12px] font-semibold tracking-[0.4px] text-[#c9cfd1]">Activities</span>
          <span className="ml-[21px] text-[9px] font-bold font-['Liberation_Serif',serif] text-[#cfcfcf]">RViz</span>
          <span className="ml-[7px] font-semibold">rviz</span>
          <span className="ml-[5px] w-0 h-0 border-x-[4px] border-x-transparent border-t-[5px] border-t-[#c8c6c0]" />
        </div>
        <div className="flex-1 text-center font-medium text-[13px] tracking-[0.5px]">Sel 10:18</div>
        <div className="w-[194px] relative h-full flex items-center">
          <svg className="ml-[37px]" width="24" height="22" viewBox="0 0 24 22">
            <circle cx="15" cy="4" r="3.500" fill="#4d53a8" /><circle cx="20" cy="6" r="2.500" fill="#3a3f8e" />
            <rect x="11" y="6" width="11" height="12" rx="2" fill="#4d53a8" />
            <rect x="1" y="5" width="11" height="11" rx="1.500" fill="#5a62c8" />
            <path d="M4 7.500h5V9H7.300v5H5.700V9H4z" fill="#fff" />
            <circle cx="17" cy="15" r="6.500" fill="#c4244e" />
            <path d="M14 17c1-1 .8-2 1-3.500a2 2 0 014 0c.2 1.500 0 2.500 1 3.500zM16 18h2v1h-2z" fill="#fff" />
          </svg>
          <svg className="ml-[27px]" width="15" height="14" viewBox="0 0 15 14" fill="none" stroke="#d8d6d0" strokeWidth="1.600">
            <path d="M1 5c3.500-3.500 9.500-3.500 13 0" stroke="#8d8b85" /><path d="M3.500 7.500c2.300-2 5.700-2 8 0" /><path d="M5.500 10c1-1 3-1 4 0" /><circle cx="7.500" cy="12" r="0.800" fill="#d8d6d0" />
          </svg>
          <svg className="ml-[11px]" width="16" height="14" viewBox="0 0 16 14" fill="none">
            <path d="M0.500 4.500h3L7.500 1v12l-4-3.500h-3z" fill="#d8d6d0" /><path d="M10 4c1 1.800 1 4.200 0 6M12.500 2.500c1.700 2.800 1.700 6.200 0 9" stroke="#d8d6d0" strokeWidth="1.300" />
          </svg>
          <svg className="ml-[14px]" width="14" height="16" viewBox="0 0 14 16" fill="none" stroke="#d8d6d0" strokeWidth="1.300">
            <path d="M3 2.500H1v13h8M9 2.500h2v5" /><rect x="3.500" y="0.800" width="5" height="3" fill="#d8d6d0" /><path d="M3 7h5M3 10h4M3 13h3" /><path d="M12 8l-2.500 4H12l-1.500 3.500 3.500-5h-2.500z" fill="#d8d6d0" stroke="none" />
          </svg>
          <span className="ml-[11px] w-0 h-0 border-x-[5px] border-x-transparent border-t-[5px] border-t-[#d8d6d0]" />
        </div>
      </div>

      <div className="flex-1 flex min-h-0">
        <Dock />
        <div className="flex-1 flex flex-col min-w-0">
          {/* title */}
          <div className="h-[28px] shrink-0 flex items-center bg-gradient-to-b from-[#403f3a] to-[#48473f] relative">
            <div className="flex-1 text-center text-[14px] font-semibold tracking-[0.45px] text-[#e8e6e0]">default.rviz* - RViz</div>
            <div className="absolute right-[5px] flex gap-[4px]">
              <WinBtn c="bg-[#6d6c66]"><span className="w-[8px] h-[2px] bg-[#35342f] block" /></WinBtn>
              <WinBtn c="bg-[#6d6c66]"><span className="w-[8px] h-[7px] border border-[#35342f] block" /></WinBtn>
              <WinBtn c="bg-[#e8612c]"><svg width="8" height="8" viewBox="0 0 8 8"><path d="M1 1l6 6M7 1L1 7" stroke="#3a2010" strokeWidth="1.200" /></svg></WinBtn>
            </div>
          </div>
          {/* menu */}
          <div className="h-[22px] shrink-0 flex items-center pl-[10px] gap-[14px] text-[14.500px] tracking-[0.15px] text-[#222] bg-[#f0ede8] border-b border-[#dcd9d3]">
            <span><span className="underline">F</span>ile</span>
            <span><span className="underline">P</span>anels</span>
            <span><span className="underline">H</span>elp</span>
          </div>
          {/* toolbar */}
          <div className="h-[39px] shrink-0 flex items-center pl-[13px] bg-[#f3f1ed] border-b-2 border-[#d4d1cb]">
            <Tool active w={84} icon={<HandI />} iconW={17} label="Interact" />
            <span className="w-[7px]" />
            <Tool w={117} icon={<MoveI />} iconW={17} label="Move Camera" />
            <Tool w={76} icon={<SelectI />} label="Select" />
            <Tool w={119} icon={<FocusI />} iconW={17} label="Focus Camera" />
            <Tool w={90} icon={<RulerI />} iconW={15} label="Measure" />
            <Tool w={138} icon={<ArrowI c="#18e640" />} label="2D Pose Estimate" />
            <Tool w={112} icon={<ArrowI c="#f018d8" />} label="2D Nav Goal" />
            <Tool w={111} icon={<PinI />} iconW={13} label="Publish Point" />
            <span className="w-[1px] h-[20px] bg-[#d4d1cb] ml-[2px]" />
            <span className="ml-[13px] flex items-center"><PlusI /></span>
            <span className="ml-[20px] flex items-center relative"><MinusI /><span className="absolute left-[14px] top-[9px]"><Caret /></span></span>
            <span className="ml-[19px] flex items-center relative"><EyeI /><span className="absolute left-[15px] top-[13px]"><Caret /></span></span>
          </div>
          {/* main */}
          <div className="h-[867px] shrink-0 flex">
            <LeftPanel />
            <div className="w-[22px] shrink-0 flex items-center relative">
              <div className="absolute left-[3px] top-0 h-full flex flex-col justify-center gap-[2px]">
                {Array.from({ length: 6 }).map((_, i) => <span key={i} className="w-[1px] h-[1px] bg-[#8a8780] block" />)}
              </div>
              <span className="ml-[11px] block w-0 h-0 border-y-[5px] border-y-transparent border-r-[5px] border-r-[#333]" />
            </div>
            <div className="w-[1473px] shrink-0"><MapView /></div>
            <div className="w-[16px] shrink-0 flex items-center justify-center bg-[#dcd9d5] border-2 border-[#bab7b2] rounded-[3px]">
              <span className="block w-0 h-0 border-y-[5px] border-y-transparent border-l-[5px] border-l-[#333]" />
            </div>
          </div>
          {/* time */}
          <div className="h-[6px] shrink-0" />
          <div className="h-[22px] shrink-0 bg-[#b7b3af] flex items-center justify-between pl-[4px] pr-[3px]">
            <div className="flex items-center">
              <svg width="16" height="16" viewBox="0 0 16 16" fill="none"><circle cx="8" cy="8" r="6.500" fill="#fff" stroke="#555" strokeWidth="1.500" /><path d="M8 4v4.500h3.500" stroke="#222" strokeWidth="1.200" /></svg>
              <span className="ml-[6px] text-[14px] text-[#111]">Time</span>
            </div>
            <XBtn />
          </div>
          <div className="h-[7px] shrink-0" />
          <div className="h-[25px] shrink-0 flex items-center pl-[11px] gap-[7px]">
            <Field label="ROS Time:" lw={76} w={142} value="1621307905.74" />
            <Field label="ROS Elapsed:" lw={95} w={141} value="414.44" />
            <Field label="Wall Time:" lw={77} w={142} value="1621307905.77" />
            <Field label="Wall Elapsed:" lw={95} w={142} value="414.41" />
            <div className="flex-1" />
            <Chk />
            <span className="text-[14px] text-[#111] ml-[-2px] mr-[16px] tracking-[0.3px]">Experimental</span>
          </div>
          <div className="flex-1 flex items-start pt-[11px] pl-[2px] pr-[1px] justify-between">
            <div className="flex items-center">
              <div className="w-[52px] h-[24px] border border-[#b8b5af] rounded-[3px] flex items-center justify-center text-[14px] text-[#111] bg-gradient-to-b from-[#f7f6f4] to-[#e6e3de]">Reset</div>
              <span className="ml-[7px] text-[14px] tracking-[0.36px] text-[#111] whitespace-nowrap">
                <b>Left-Click:</b> Rotate. <b>Middle-Click:</b> Move X/Y. <b>Right-Click/Mouse Wheel:</b> Zoom. <b>Shift:</b> More options.
              </span>
            </div>
            <span className="text-[14px] text-[#111] mt-[-1px]">31 fps</span>
          </div>
        </div>
      </div>
    </div>
  );
}
